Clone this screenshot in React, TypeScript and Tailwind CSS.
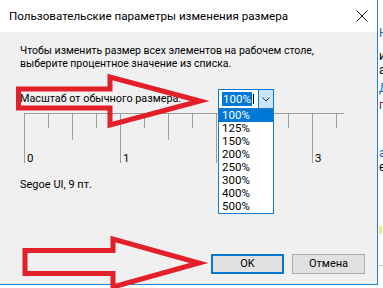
import React from "react";

const scales = ["100%", "125%", "150%", "200%", "250%", "300%", "400%", "500%"];

function TitleBar() {
  return (
    <div className="flex h-[32px] shrink-0 items-center justify-between bg-white pl-[9px] pr-[9px]">
      <span className="text-[11.6px] leading-[16px] text-black">Пользовательские параметры изменения размера</span>
      <svg width="12" height="12" viewBox="0 0 12 12" className="mb-[1px]">
        <path d="M0.5 0.5 L11.5 11.5 M11.5 0.5 L0.5 11.5" stroke="#111" strokeWidth="1" />
      </svg>
    </div>
  );
}

function Combo() {
  return (
    <div className="relative flex h-[20px] w-[56px] border border-[#0078d7] bg-white">
      <div className="flex flex-1 items-center pl-[3px]">
        <span className="bg-[#0078d7] px-[1px] text-[11.5px] leading-[14px] text-white">100%</span>
        <span className="ml-[1px] h-[10px] w-px bg-black" />
      </div>
      <div className="flex w-[15px] items-center justify-center border-l border-[#0078d7] bg-[#cce4f7]">
        <svg width="8" height="5" viewBox="0 0 8 5">
          <path d="M0.5 0.5 L4 4 L7.5 0.5" stroke="#333" strokeWidth="1" fill="none" />
        </svg>
      </div>
      <ul className="absolute left-[-1px] top-full z-10 w-[56px] border border-[#1979ca] bg-white py-0">
        {scales.map((s, i) => (
          <li
            key={s}
            className={`h-[13px] pl-[3px] text-[11.5px] leading-[13px] ${i === 0 ? "bg-[#0078d7] text-white" : "text-black"}`}
          >
            {s}
          </li>
        ))}
      </ul>
    </div>
  );
}

function Ruler() {
  const ticks = [];
  for (let i = 0; i <= 13; i++) {
    const x = 0.5 + i * 24;
    const len = i % 4 === 0 ? 50 : i % 2 === 0 ? 27 : 15;
    ticks.push(<line key={i} x1={x} y1={1} x2={x} y2={1 + len} stroke="#a0a0a0" strokeWidth="1" />);
  }
  return (
    <svg width="330" height="54" className="ml-[4px] mt-[3px] block shrink-0">
      <line x1="0" y1="1.5" x2="320" y2="1.5" stroke="#a0a0a0" strokeWidth="1" />
      {ticks}
      {/* the "2" label sits under the open list */}
      {[0, 1, 3].map((n) => (
        <text key={n} x={n * 96 + 3} y="50" fontSize="11.5" fill="#000" fontFamily="Roboto, sans-serif">
          {n}
        </text>
      ))}
    </svg>
  );
}

function Button({ label, primary }: { label: string; primary?: boolean }) {
  return (
    <button
      className={`flex h-[20px] w-[73px] items-center justify-center bg-[#e1e1e1] text-[11px] leading-[14px] text-black ${
        primary ? "border-2 border-[#0078d7]" : "border border-[#adadad]"
      }`}
    >
      {label}
    </button>
  );
}

function RightStrip() {
  return (
    <div className="w-[5px] shrink-0 overflow-hidden pl-px text-[12px] leading-[14px]">
      <div className="mt-[26px] h-[14px] text-[#1e5fb4]">Н</div>
      <div className="mt-[9px] h-[14px] text-black">и</div>
      <div className="h-[14px] text-black">а</div>
      <div className="mt-[4px] h-[14px] text-[#1e5fb4] underline">Д</div>
      <div className="mt-[3px] h-[14px] text-[#8b1a1a]">г</div>
      <div className="mt-[34px] h-[14px] text-[#1e5fb4]">а</div>
      <div className="h-[14px] text-black">е</div>
      <div className="mt-[52px] h-[8px] w-[3px] bg-[#f7e58a]" />
      <div className="mt-[31px] h-px w-full bg-[#c8c8c8]" />
    </div>
  );
}

function Arrows() {
  return (
    <svg width="383" height="288" className="pointer-events-none absolute inset-0">
      <path
        d="M18.5 89 H110 V77 L200 101 L110 125 V108 H18.5 Z"
        fill="none"
        stroke="#e3202a"
        strokeWidth="5"
        strokeLinejoin="miter"
      />
      <path
        d="M25 250.5 H113 V239 L199 263 L113 287 V273.5 H25 Z"
        fill="none"
        stroke="#e3202a"
        strokeWidth="5"
        strokeLinejoin="miter"
      />
    </svg>
  );
}

export default function App() {
  return (
    <div className="relative flex h-[288px] w-[383px] overflow-hidden bg-white font-[Roboto,sans-serif] text-black">
      <div className="flex h-[285px] w-[378px] shrink-0 flex-col border-r border-b border-[#1883d7]">
        <TitleBar />
        <div className="flex flex-1 flex-col bg-[#f0f0f0] pl-[20px] pr-[12px]">
          <p className="mt-[12px] text-[10.5px] leading-[13px]">
            Чтобы изменить размер всех элементов на рабочем столе,
            <br />
            выберите процентное значение из списка.
          </p>
          <div className="mt-[19px] flex h-[20px] items-center">
            <span className="w-[198px] text-[10.8px] leading-[14px]">Масштаб от обычного размера:</span>
            <Combo />
          </div>
          <Ruler />
          <p className="mt-[12px] text-[11px] leading-[13px]">Segoe UI, 9 пт.</p>
          <div className="mb-[10px] mt-auto flex justify-end gap-[8px]">
            <Button label="OK" primary />
            <Button label="Отмена" />
          </div>
        </div>
      </div>
      <RightStrip />
      <Arrows />
    </div>
  );
}
